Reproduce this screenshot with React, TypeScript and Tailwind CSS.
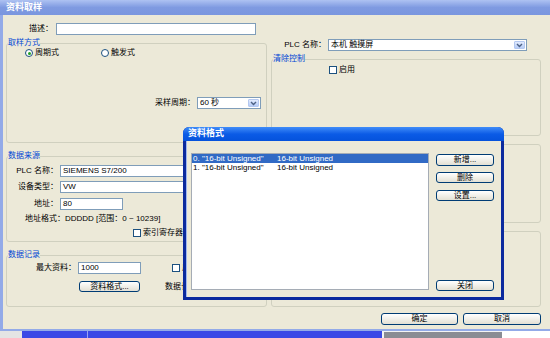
import React from "react";

type Kids = { className?: string; children?: React.ReactNode };

const Field = ({ className = "", children }: Kids) => (
  <div className={`h-[12px] border border-[#7f9db9] bg-white pl-[2px] leading-[10px] ${className}`}>
    {children}
  </div>
);

const Combo = ({ className = "", children }: Kids) => (
  <div className={`flex h-[12px] items-center border border-[#7f9db9] bg-white pl-[2px] ${className}`}>
    <span className="flex-1 leading-[10px]">{children}</span>
    <span className="mr-[1px] flex h-[8px] w-[11px] items-center justify-center rounded-[1px] border border-[#b4c8f0] bg-linear-to-b from-[#e2ebfd] to-[#b6ccf7]">
      <svg width="7" height="5" viewBox="0 0 7 5">
        <path d="M1 1l2.5 2.5L6 1" stroke="#4d6185" strokeWidth="1.4" fill="none" />
      </svg>
    </span>
  </div>
);

const XpButton = ({ className = "", children }: Kids) => (
  <div
    className={`flex items-center justify-center rounded-[3px] border border-[#003c74] bg-linear-to-b from-white to-[#e3e0d4] leading-none ${className}`}
  >
    {children}
  </div>
);

const Radio = ({ checked }: { checked?: boolean }) => (
  <span className="flex h-[8px] w-[8px] items-center justify-center rounded-full border border-[#1c5180] bg-white">
    {checked && <span className="h-[3px] w-[3px] rounded-full bg-[#21a121]" />}
  </span>
);

const Check = () => <span className="block h-[8px] w-[8px] shrink-0 border border-[#1c5180] bg-white" />;

const Group = ({ title, className = "", children }: Kids & { title?: string }) => (
  <fieldset className={`rounded-[3px] border border-[#d0d0bf] ${className}`}>
    {title && <legend className="ml-[1px] text-[8px] leading-[8px] text-[#0046d5]">{title}</legend>}
    {children}
  </fieldset>
);

export default function App() {
  return (
    <div className="relative h-[338px] w-[550px] overflow-hidden bg-[#ece9d8] font-['Liberation_Sans','Noto_Sans_CJK_SC',sans-serif] text-[8px] text-black">
      {/* main window title (inactive) */}
      <div className="flex h-[15px] items-center bg-linear-to-b from-[#aec2f2] via-[#7f9ae1] to-[#7a96df] pl-[6px] text-[9px] font-bold text-white">
        资料取样
      </div>

      <div className="flex h-[316px] border-b-[2px] border-l-[3px] border-[#93aae8]">
        {/* left column */}
        <div className="ml-[3px] flex w-[261px] flex-col">
          <div className="mt-[8px] flex items-center">
            <span className="w-[47px] text-right leading-[12px]">描述：</span>
            <Field className="ml-[3px] w-[200px]" />
          </div>

          <Group title="取样方式" className="mt-[4px] h-[104px]">
            <div className="mt-[2px] flex items-center leading-[8px]">
              <div className="ml-[18px] flex w-[76px] items-center">
                <Radio checked />
                <span className="ml-[2px]">周期式</span>
              </div>
              <Radio />
              <span className="ml-[2px]">触发式</span>
            </div>
            <div className="mt-[40px] flex items-center justify-end pr-[5px]">
              <span className="leading-[12px]">采样周期：</span>
              <Combo className="ml-[2px] w-[64px]">60 秒</Combo>
            </div>
          </Group>

          <Group title="数据来源" className="mt-[9px] h-[90px]">
            <div className="mt-[5px] flex items-center">
              <span className="w-[51px] text-right leading-[12px]">PLC 名称：</span>
              <Field className="ml-[2px] w-[190px]">SIEMENS S7/200</Field>
            </div>
            <div className="mt-[4px] flex items-center">
              <span className="w-[51px] text-right leading-[12px]">设备类型：</span>
              <Field className="ml-[2px] w-[190px]">VW</Field>
            </div>
            <div className="mt-[5px] flex items-center">
              <span className="w-[51px] text-right leading-[12px]">地址：</span>
              <Field className="ml-[2px] w-[63px]">80</Field>
            </div>
            <div className="ml-[18px] mt-[5px] leading-[8px]">地址格式：DDDDD [范围：0 ~ 10239]</div>
            <div className="ml-[126px] mt-[6px] flex items-center leading-[8px]">
              <Check />
              <span className="ml-[2px]">索引寄存器</span>
            </div>
          </Group>

          <Group title="数据记录" className="mt-[9px] h-[56px]">
            <div className="mt-[3px] flex items-center">
              <span className="w-[69px] text-right leading-[12px]">最大资料：</span>
              <Field className="ml-[2px] w-[63px]">1000</Field>
              <span className="ml-[31px]">
                <Check />
              </span>
              <span className="ml-[2px]">启用</span>
            </div>
            <div className="mt-[7px] flex items-center">
              <XpButton className="ml-[72px] h-[11px] w-[61px]">资料格式...</XpButton>
              <span className="ml-[25px] leading-[11px]">数据长度：</span>
            </div>
          </Group>
        </div>

        {/* right column */}
        <div className="ml-[4px] flex w-[270px] flex-col">
          <div className="mt-[24px] flex items-center">
            <span className="w-[55px] text-right leading-[12px]">PLC 名称：</span>
            <Combo className="ml-[2px] w-[199px]">本机 触摸屏</Combo>
          </div>
          <Group title="清除控制" className="mt-[4px] h-[81px]">
            <div className="ml-[57px] mt-[3px] flex items-center leading-[8px]">
              <Check />
              <span className="ml-[2px]">启用</span>
            </div>
          </Group>
          <div className="mt-[8px] h-[79px] rounded-[3px] border border-[#d0d0bf]" />
          <div className="mt-[8px] h-[76px] rounded-[3px] border border-[#d0d0bf]" />
          <div className="ml-[110px] mt-[6px] flex gap-[5px]">
            <XpButton className="h-[12px] w-[79px]">确定</XpButton>
            <XpButton className="h-[12px] w-[80px]">取消</XpButton>
          </div>
        </div>
      </div>

      {/* taskbar strip */}
      <div className="flex h-[7px]">
        <div className="w-[22px] bg-[#e4e4e4]" />
        <div className="w-[66px] border-r border-[#9aa2f2] bg-[#3a48e6]" />
        <div className="w-[294px] bg-[#3a48e6]" />
        <div className="w-[120px] border-l-[2px] border-t border-[#f4f4f4] bg-[#8a8c94]" />
        <div className="flex-1 bg-white" />
      </div>

      {/* 资料格式 dialog */}
      <div className="absolute left-[183px] top-[127px] flex h-[173px] w-[321px] flex-col overflow-hidden rounded-t-[6px] bg-[#0b2a9e]">
        <div className="flex h-[14px] items-center bg-linear-to-b from-[#3f8cf8] via-[#0b5be6] to-[#0552dc] pl-[5px] text-[9px] font-bold text-white">
          资料格式
        </div>
        <div className="mx-[3px] mb-[3px] flex flex-1 border-l border-[#9fb7f0] bg-[#ece9d8]">
          <div className="ml-[4px] mt-[12px] h-[137px] w-[238px] border border-[#a5acb5] bg-white leading-[9px]">
            <div className="flex h-[9px] bg-[#316ac5] text-white">
              <span className="w-[85px] pl-[1px]">0. "16-bit Unsigned"</span>
              <span>16-bit Unsigned</span>
            </div>
            <div className="flex h-[9px]">
              <span className="w-[85px] pl-[1px]">1. "16-bit Unsigned"</span>
              <span>16-bit Unsigned</span>
            </div>
          </div>
          <div className="ml-[7px] mt-[13px] flex flex-col">
            <XpButton className="h-[12px] w-[58px]">新增...</XpButton>
            <XpButton className="mt-[6px] h-[11px] w-[58px]">删除</XpButton>
            <XpButton className="mt-[7px] h-[11px] w-[58px]">设置...</XpButton>
            <XpButton className="mt-[79px] h-[11px] w-[58px]">关闭</XpButton>
          </div>
        </div>
      </div>
    </div>
  );
}
